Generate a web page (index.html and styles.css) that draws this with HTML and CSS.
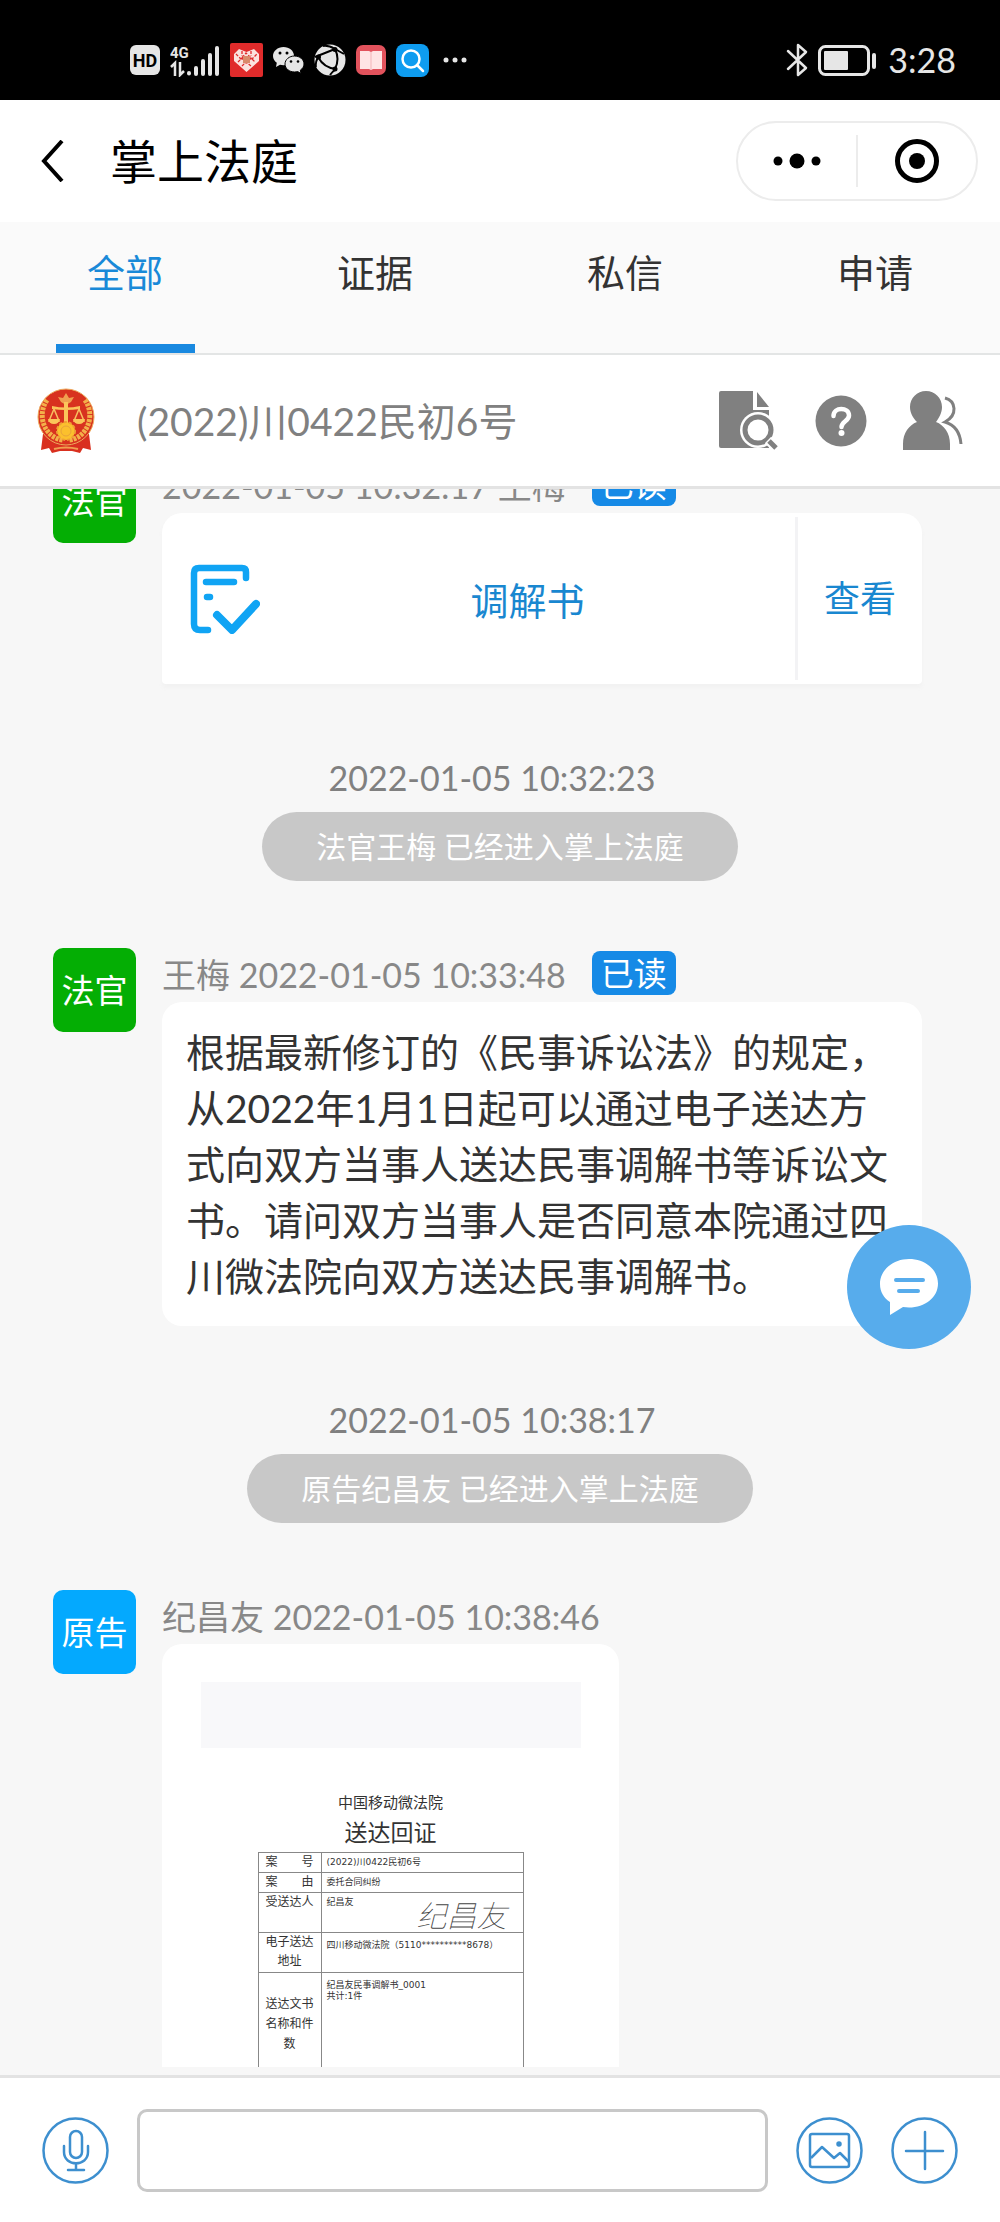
FILE: index.html
```html
<!DOCTYPE html>
<html lang="zh-CN">
<head>
  <meta charset="UTF-8">
  <meta name="viewport" content="width=device-width, initial-scale=1">
  <title>掌上法庭</title>
  <link rel="stylesheet" href="styles.css">
</head>
<body>

<!-- phone status bar -->
<div class="status-bar">
  <div class="status-left">
    <svg width="30" height="30" viewBox="0 0 30 30">
      <rect width="30" height="30" rx="6" fill="#e6e6e6"/>
      <text x="15" y="22" text-anchor="middle" class="hd-text">HD</text>
    </svg>
    <svg width="50" height="34" viewBox="0 0 50 34">
      <text x="0" y="15" class="net-text">4G</text>
      <g stroke="#e6e6e6" stroke-width="2.500" fill="none">
        <path d="M1 24l4-4v13M10 19v13l4-4"/>
      </g>
      <g stroke="#e6e6e6" stroke-width="4" stroke-linecap="round">
        <path d="M19 30v.5M26 25v6M33 18v13M40 12v19M47 5v26"/>
      </g>
    </svg>
    <svg width="33" height="34" viewBox="0 0 33 34">
      <rect width="33" height="34" rx="2" fill="#e02b2b"/>
      <path d="M16.500 29L4 18V11l5-5 7.500 3L24 6l5 5v7z" fill="#fbe3df"/>
      <path d="M6 11l5 5 5-6 6 6 5-5M8 19l4-4 4 6 5-6 4 4M12 23l4-4 5 4M12 8v5M21 8v5" stroke="#e02b2b" stroke-width="1.300" fill="none" stroke-dasharray="3 1.500"/>
      <rect x="13" y="13" width="7" height="7" fill="#d98a6a"/>
    </svg>
    <svg width="31" height="28" viewBox="0 0 31 28">
      <path d="M10.500 1C4.700 1 0 5 0 10c0 2.800 1.500 5.200 3.800 6.800L3 21l4-2.200c1.200.3 2.300.4 3.500.4 5.800 0 10.500-4 10.500-9.200S16.300 1 10.500 1z" fill="#e6e6e6"/>
      <path d="M21.500 10c-5.200 0-9.500 3.500-9.500 8s4.300 8 9.500 8c1.100 0 2.200-.1 3.200-.4L28 27.500l-.7-3.300c2.300-1.500 3.700-3.700 3.700-6.200 0-4.500-4.300-8-9.500-8z" fill="#e6e6e6" stroke="#000"/>
      <g fill="#000"><circle cx="7" cy="7" r="1.500"/><circle cx="14" cy="7" r="1.500"/><circle cx="18" cy="15.500" r="1.300"/><circle cx="25" cy="15.500" r="1.300"/></g>
    </svg>
    <svg width="32" height="32" viewBox="0 0 32 32">
      <circle cx="16" cy="16" r="15.500" fill="#e6e6e6"/>
      <path d="M1 13L21 5M21 5q5 10 0 20M4 13q6 11 18 12M21 5Q14 1 9 2M4 13q-3 6-2 10M22 25q-4 3-6 6M21 5l9 5" stroke="#000" stroke-width="2" fill="none"/>
      <g fill="#000"><circle cx="21" cy="5.500" r="2.500"/><circle cx="4.500" cy="13" r="2.500"/><circle cx="21" cy="25" r="2.500"/></g>
    </svg>
    <svg width="30" height="30" viewBox="0 0 30 30">
      <rect width="30" height="30" rx="7" fill="#e2525c"/>
      <path d="M4 6h9l2 1 2-1h9v18h-9l-2 1-2-1H4z" fill="#ffe4e4"/>
      <path d="M15 7v18" stroke="#f3b4b8"/>
    </svg>
    <svg width="33" height="33" viewBox="0 0 33 33">
      <rect width="33" height="33" rx="8" fill="#0e9cf0"/>
      <circle cx="15" cy="15" r="8.500" fill="none" stroke="#fff" stroke-width="2.500"/>
      <path d="M21 21l6 6" stroke="#fff" stroke-width="2.500" stroke-linecap="round"/>
    </svg>
    <svg class="more" width="24" height="6" viewBox="0 0 24 6" fill="#e6e6e6">
      <circle cx="3" cy="3" r="2.500"/><circle cx="12" cy="3" r="2.500"/><circle cx="21" cy="3" r="2.500"/>
    </svg>
  </div>
  <div class="status-right">
    <svg width="22" height="34" viewBox="0 0 22 34" fill="none" stroke="#e6e6e6" stroke-width="2.500" stroke-linejoin="round" stroke-linecap="round">
      <path d="M2 8l18 17-8 7V2l8 7L2 26"/>
    </svg>
    <svg width="60" height="31" viewBox="0 0 60 31">
      <rect x="1.500" y="1.500" width="49" height="28" rx="6" fill="none" stroke="#e6e6e6" stroke-width="3"/>
      <rect x="6" y="6" width="24" height="19" rx="1" fill="#e6e6e6"/>
      <rect x="54" y="8" width="4" height="16" rx="2" fill="#e6e6e6"/>
    </svg>
    <span class="clock">3:28</span>
  </div>
</div>

<header class="nav-bar">
  <button class="back" aria-label="返回">
    <svg width="24" height="42" viewBox="0 0 24 42" fill="none" stroke="#000" stroke-width="4">
      <path d="M21 1L3 21l18 20"/>
    </svg>
  </button>
  <h1>掌上法庭</h1>
  <div class="capsule">
    <button aria-label="更多">
      <svg width="48" height="16" viewBox="0 0 48 16">
        <circle cx="5" cy="8" r="4.500"/><circle cx="24" cy="8" r="7.500"/><circle cx="43" cy="8" r="4.500"/>
      </svg>
    </button>
    <button aria-label="关闭">
      <svg width="46" height="46" viewBox="0 0 46 46">
        <circle cx="23" cy="23" r="19.500" fill="none" stroke="#000" stroke-width="5"/>
        <circle cx="23" cy="23" r="8"/>
      </svg>
    </button>
  </div>
</header>

<nav class="tabs">
  <button class="tab active">全部</button>
  <button class="tab">证据</button>
  <button class="tab">私信</button>
  <button class="tab">申请</button>
</nav>

<section class="case-bar">
  <svg width="58" height="66" viewBox="0 0 58 66">
    <path d="M6 46l-2 16 8-2 3 5 8-2h12l8 2 3-5 8 2-2-16z" fill="#d9301f"/>
    <circle cx="29" cy="29" r="28" fill="#d8321f" stroke="#edaa5c"/>
    <path d="M10 12C-1 28 8 50 26 52M48 12c11 16 2 38-16 40" fill="none" stroke="#f3b04a" stroke-width="5" stroke-dasharray="3 1"/>
    <path d="M29 5l3 5 5-1-3 5-5 3-5-3-3-5 5 1z" fill="#f0a050"/>
    <path d="M27 14h4v26h-4zM15 18q14 3 28 0v3q-14 2-28 0z" fill="#fbc55a"/>
    <path d="M17 21l-5 12h10zM42 21l-5 12h10z" fill="none" stroke="#f8c060" stroke-width="1.500"/>
    <path d="M11 31h12q-1 5-6 5t-6-5zM36 31h12q-1 5-6 5t-6-5z" fill="#fbc55a"/>
    <circle cx="29" cy="43" r="9" fill="#fbc02d" stroke="#eea033" stroke-width="2" stroke-dasharray="3 2"/>
    <circle cx="29" cy="43" r="5" fill="none" stroke="#e8a33a"/>
    <path d="M17 61q12-3 24 0" fill="none" stroke="#f0a050" stroke-width="2"/>
  </svg>
  <h2>(2022)川0422民初6号</h2>
  <div class="case-tools">
    <button aria-label="查阅卷宗">
      <svg width="60" height="60" viewBox="0 0 60 60" fill="#808080">
        <path d="M2 0h32v19h16v38H2a2 2 0 0 1-2-2V2a2 2 0 0 1 2-2z"/>
        <path d="M38 1l12 15H38z"/>
        <circle cx="39" cy="39" r="18" fill="#fff"/>
        <circle cx="39" cy="39" r="13" fill="#fff" stroke="#808080" stroke-width="5"/>
        <path d="M49 49l9 9" stroke="#fff" stroke-width="9"/>
        <path d="M50 50l7 7" stroke="#808080" stroke-width="5"/>
      </svg>
    </button>
    <button aria-label="帮助">
      <svg width="52" height="52" viewBox="0 0 52 52">
        <circle cx="26" cy="26" r="25.500" fill="#808080"/>
        <path d="M18.500 21c0-9.500 15.500-9 15.500-.5 0 5.500-7.500 6-7.500 11.500" fill="none" stroke="#fff" stroke-width="4.500" stroke-linecap="round"/>
        <circle cx="26.500" cy="38" r="3" fill="#fff"/>
      </svg>
    </button>
    <button aria-label="参与人">
      <svg width="60" height="60" viewBox="0 0 60 60" fill="#808080">
        <path d="M23 0c9 0 16 7 16 16 0 6-3 11-6 15 8 3 14 11 14 22v6H0v-6c0-11 6-19 14-22-4-4-7-9-7-15C7 7 14 0 23 0z"/>
        <path d="M42 7c11 3 13 17 0 24 10 3 15 10 16 22" fill="none" stroke="#808080" stroke-width="3"/>
      </svg>
    </button>
  </div>
</section>

<main class="chat">

  <article class="message">
    <div class="avatar judge">法官</div>
    <div class="content">
      <div class="meta">2022-01-05 10:32:17 王梅 <span class="read">已读</span></div>
      <div class="file-card">
        <svg width="70" height="70" viewBox="0 0 70 70" fill="none" stroke="#10a4f4" stroke-width="6.500" stroke-linecap="round" stroke-linejoin="round">
          <path d="M56 14V8q0-4-4-4H9Q4 4 4 9v51q0 6 6 6h8"/>
          <path d="M16 18h28M17 33h3"/>
          <path d="M27 51l15 15 24-26" stroke-width="8"/>
        </svg>
        <span class="file-name">调解书</span>
        <a class="view" href="#">查看</a>
      </div>
    </div>
  </article>

  <div class="notice">
    <time>2022-01-05 10:32:23</time>
    <p>法官王梅 已经进入掌上法庭</p>
  </div>

  <article class="message">
    <div class="avatar judge">法官</div>
    <div class="content">
      <div class="meta">王梅 2022-01-05 10:33:48 <span class="read">已读</span></div>
      <p class="bubble">根据最新修订的《民事诉讼法》的规定，从2022年1月1日起可以通过电子送达方式向双方当事人送达民事调解书等诉讼文书。请问双方当事人是否同意本院通过四川微法院向双方送达民事调解书。</p>
    </div>
  </article>

  <div class="notice">
    <time>2022-01-05 10:38:17</time>
    <p>原告纪昌友 已经进入掌上法庭</p>
  </div>

  <article class="message">
    <div class="avatar plaintiff">原告</div>
    <div class="content">
      <div class="meta">纪昌友 2022-01-05 10:38:46</div>
      <div class="receipt">
        <div class="receipt-blank"></div>
        <h3>中国移动微法院</h3>
        <h4>送达回证</h4>
        <table>
          <tr><th class="spread">案 号</th><td>(2022)川0422民初6号</td></tr>
          <tr><th class="spread">案 由</th><td>委托合同纠纷</td></tr>
          <tr class="tall"><th>受送达人</th><td class="signed">纪昌友<span class="signature">纪昌友</span></td></tr>
          <tr class="tall"><th>电子送达地址</th><td class="address">四川移动微法院（5110**********8678）</td></tr>
          <tr class="docs"><th>送达文书名称和件数</th><td>纪昌友民事调解书_0001<br>共计:1件</td></tr>
        </table>
      </div>
    </div>
  </article>

</main>

<button class="chat-float" aria-label="消息">
  <svg width="60" height="58" viewBox="0 0 60 58">
    <path d="M30 1C14 1 1 12 1 26c0 8 4 14 10 18v13l13-8c2 .3 4 .4 6 .4 16 0 29-10 29-24S46 1 30 1z" fill="#fff"/>
    <path d="M17 22h27M20 33h19" stroke="#57acec" stroke-width="4" stroke-linecap="round"/>
  </svg>
</button>

<footer class="input-bar">
  <button aria-label="语音">
    <svg width="67" height="67" viewBox="0 0 67 67" fill="none" stroke="#3d8fcf" stroke-width="2.500" stroke-linecap="round">
      <circle cx="33.500" cy="33.500" r="32"/>
      <rect x="28" y="14" width="12" height="27" rx="6"/>
      <path d="M22 29v6c0 15 24 15 24 0v-6M34 47v6M26 53h16"/>
    </svg>
  </button>
  <input type="text" aria-label="输入消息">
  <button aria-label="图片">
    <svg width="67" height="67" viewBox="0 0 67 67" fill="none" stroke="#3d8fcf" stroke-width="2.500" stroke-linejoin="round">
      <circle cx="33.500" cy="33.500" r="32"/>
      <rect x="14" y="17" width="39" height="33" rx="2"/>
      <path d="M15 41l11-11 12 11 6-5 9 9"/>
      <circle cx="43" cy="27" r="1.500" fill="#3d8fcf"/>
    </svg>
  </button>
  <button aria-label="添加">
    <svg width="67" height="67" viewBox="0 0 67 67" fill="none" stroke="#3d8fcf" stroke-width="2.500" stroke-linecap="round">
      <circle cx="33.500" cy="33.500" r="32"/>
      <path d="M15 34h37M34 15v37"/>
    </svg>
  </button>
</footer>

</body>
</html>
```
FILE: styles.css
```css
* {
  box-sizing: border-box;
}

body {
  margin: 0;
  height: 100vh;
  display: flex;
  flex-direction: column;
  font-family: Lato, "Noto Sans CJK SC", sans-serif;
  color: #333;
  background: #f7f7f7;
}

h1, h2, h3, h4, p {
  margin: 0;
  font-weight: normal;
}

button {
  padding: 0;
  border: none;
  background: none;
  font-family: inherit;
  cursor: pointer;
}

svg {
  display: block;
  flex-shrink: 0;
}

/* status bar */
.status-bar {
  flex-shrink: 0;
  height: 100px;
  padding: 20px 44px 0 130px;
  display: flex;
  align-items: center;
  justify-content: space-between;
  background: #000;
  color: #e6e6e6;
}

.status-left, .status-right {
  display: flex;
  align-items: center;
  gap: 10px;
}

.more {
  margin-left: 4px;
}

.hd-text {
  font: bold 18px Roboto, sans-serif;
}

.net-text {
  font: bold 15px Roboto, sans-serif;
  fill: #e6e6e6;
}

.clock {
  font-size: 34px;
  line-height: 40px;
}

/* title bar */
.nav-bar {
  flex-shrink: 0;
  height: 122px;
  padding: 0 22px 0 41px;
  display: flex;
  align-items: center;
  background: #fff;
}

.nav-bar h1 {
  flex: 1;
  margin-left: 45px;
  font-size: 47px;
  line-height: 60px;
  color: #000;
}

.capsule {
  width: 242px;
  height: 80px;
  display: flex;
  align-items: center;
  border: 2px solid #ececec;
  border-radius: 40px;
}

.capsule button {
  flex: 1;
  height: 52px;
  display: flex;
  align-items: center;
  justify-content: center;
}

.capsule button + button {
  border-left: 2px solid #ececec;
}

/* tabs */
.tabs {
  flex-shrink: 0;
  display: flex;
  background: #fafafa;
  border-bottom: 2px solid #e3e5e5;
}

.tab {
  flex: 1;
  height: 131px;
  padding-top: 25px;
  display: flex;
  flex-direction: column;
  align-items: center;
  justify-content: space-between;
  font-size: 38px;
  line-height: 50px;
  color: #333;
}

.tab.active {
  color: #1989d8;
}

.tab.active::after {
  content: "";
  width: 139px;
  height: 9px;
  background: #1989e0;
}

/* case number */
.case-bar {
  flex-shrink: 0;
  height: 134px;
  padding: 0 37px;
  display: flex;
  align-items: center;
  background: #fff;
  border-bottom: 3px solid #e3e3e3;
}

.case-bar h2 {
  flex: 1;
  margin-left: 42px;
  font-size: 39px;
  line-height: 50px;
  color: #808080;
}

.case-tools {
  display: flex;
  align-items: center;
  gap: 36px;
}

/* messages, newest at the bottom */
.chat {
  flex: 1;
  min-height: 0;
  padding: 0 78px 8px 53px;
  display: flex;
  flex-direction: column;
  justify-content: flex-end;
  overflow: hidden;
}

.message {
  flex-shrink: 0;
  display: flex;
  align-items: flex-start;
  gap: 26px;
}

.avatar {
  flex-shrink: 0;
  width: 83px;
  height: 84px;
  border-radius: 10px;
  font-size: 33px;
  line-height: 84px;
  text-align: center;
  color: #fff;
}

.judge {
  background: #04ae04;
}

.plaintiff {
  background: #04a9fe;
}

.content {
  flex: 1;
  padding-top: 3px;
}

.meta {
  display: flex;
  align-items: center;
  gap: 26px;
  height: 44px;
  margin-bottom: 7px;
  font-size: 34px;
  color: #888;
}

.read {
  padding: 0 9px;
  line-height: 44px;
  border-radius: 8px;
  background: #168ae6;
  font-size: 33px;
  color: #fff;
}

.bubble {
  padding: 22px 24px;
  border-radius: 20px;
  background: #fff;
  font-size: 39px;
  line-height: 56px;
}

.file-card {
  height: 171px;
  padding-left: 28px;
  display: flex;
  align-items: center;
  border-radius: 20px 20px 4px 4px;
  background: #fff;
  box-shadow: 0 4px 4px #f2f2f2;
  font-size: 38px;
  color: #1987d0;
}

.file-name {
  flex: 1;
  text-align: center;
}

.view {
  width: 127px;
  line-height: 163px;
  border-left: 3px solid #f3f3f5;
  font-size: 36px;
  text-align: center;
  text-decoration: none;
  color: inherit;
}

.notice {
  flex-shrink: 0;
  margin: 74px 0 67px;
  padding-left: 25px;
  display: flex;
  flex-direction: column;
  align-items: center;
  gap: 14px;
}

.notice time {
  padding-right: 16px;
  font-size: 34px;
  line-height: 40px;
  color: #808080;
}

.notice p {
  padding: 0 54px;
  border-radius: 35px;
  background: #c8c8c8;
  font-size: 30px;
  line-height: 69px;
  color: #fff;
}

/* service receipt preview */
.receipt {
  width: 457px;
  height: 423px;
  padding-top: 38px;
  display: flex;
  flex-direction: column;
  align-items: center;
  border-radius: 20px 20px 0 0;
  overflow: hidden;
  background: #fff;
  color: #333;
}

.receipt-blank {
  flex-shrink: 0;
  width: 380px;
  height: 66px;
  margin-bottom: 42px;
  background: #f8f8fa;
}

.receipt h3 {
  font-size: 15px;
  line-height: 24px;
}

.receipt h4 {
  margin: 2px 0 4px;
  font-size: 23px;
  line-height: 32px;
}

.receipt table {
  width: 266px;
  table-layout: fixed;
  border-collapse: collapse;
  font-family: "DejaVu Sans", "Noto Sans CJK SC", sans-serif;
}

.receipt th, .receipt td {
  height: 20px;
  border: 1px solid #888;
  vertical-align: top;
}

.receipt th {
  width: 63px;
  padding: 0 7px;
  font-size: 12px;
  font-weight: normal;
  line-height: 19px;
}

.receipt .spread {
  text-align: justify;
  text-align-last: justify;
}

.receipt td {
  padding: 4px 5px;
  font-size: 9px;
  line-height: 11px;
  white-space: nowrap;
}

.receipt .tall th, .receipt .tall td {
  height: 40px;
}

.receipt .address {
  padding-top: 7px;
}

.receipt .docs th {
  padding-top: 21px;
  height: 110px;
  line-height: 20px;
}

.receipt .docs td {
  padding-top: 7px;
}

.signed {
  position: relative;
}

/* handwritten name laid over the cell */
.signature {
  position: absolute;
  right: 16px;
  bottom: 0;
  font-size: 30px;
  font-style: italic;
  font-weight: 100;
  line-height: 30px;
  color: #444;
}

/* floating message button */
.chat-float {
  position: fixed;
  right: 29px;
  bottom: 873px;
  width: 124px;
  height: 124px;
  display: flex;
  align-items: center;
  justify-content: center;
  border-radius: 50%;
  background: #57acec;
}

/* input bar */
.input-bar {
  flex-shrink: 0;
  height: 147px;
  padding: 0 42px;
  display: flex;
  align-items: center;
  gap: 28px;
  background: #fff;
  border-top: 3px solid #e3e3e3;
}

.input-bar input {
  flex: 1;
  min-width: 0;
  height: 83px;
  padding: 0 20px;
  border: 3px solid #c8c8c8;
  border-radius: 10px;
  background: #fff;
  font-size: 38px;
}
```
